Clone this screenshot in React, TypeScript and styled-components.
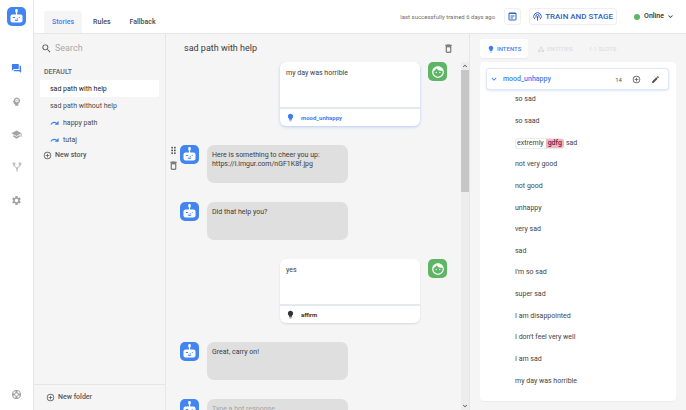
import React from "react";
import styled, { createGlobalStyle, css } from "styled-components";
import {
  MdAddCircleOutline,
  MdCategory,
  MdDragIndicator,
  MdEdit,
  MdExpandMore,
  MdFace,
  MdLightbulb,
  MdOutlineDelete,
  MdQuestionAnswer,
  MdSchool,
  MdSearch,
  MdSettings,
  MdSettingsEthernet,
  MdPsychology,
  MdSupport,
} from "react-icons/md";

const blue = "#3f7ef0";
const line = "#e6e6e6";

const GlobalStyle = createGlobalStyle`
  *, *::before, *::after { box-sizing: border-box; }
  body { margin: 0; background: #f5f5f5; color: #444; font: 400 7px/9px Roboto, sans-serif; }
  button, input, textarea { font: inherit; color: inherit; border: 0; padding: 0; margin: 0; background: none; outline: 0; }
  button { cursor: pointer; }
  svg { display: block; flex: none; }
  h1, h2, ul { margin: 0; padding: 0; list-style: none; }
`;

const Page = styled.div`
  display: grid;
  grid-template: 34px minmax(0, 1fr) / 34px 132px minmax(0, 1fr) 216px;
  height: 100vh;
  overflow: hidden;
`;

const Rail = styled.nav`
  grid-row: 1 / 3;
  display: flex;
  flex-direction: column;
  align-items: center;
  background: #fff;
  border-right: 1px solid ${line};
  padding: 7px 0 10px;
`;

const RailLinks = styled.div`
  flex: 1;
  display: flex;
  flex-direction: column;
  align-items: center;
  gap: 21px;
  margin-top: 36px;
`;

const RailLink = styled.a<{ $active?: boolean }>`
  display: grid;
  place-items: center;
  width: 12px;
  height: 12px;
  color: ${(p) => (p.$active ? blue : "#a3a3a3")};
`;

const Header = styled.header`
  grid-column: 2 / 5;
  display: flex;
  align-items: center;
  background: #fff;
  border-bottom: 1px solid ${line};
  padding: 0 11px 0 10px;
`;

const HeaderTabs = styled.nav`
  display: flex;
  align-self: flex-end;
  flex: 1;
`;

const HeaderTab = styled.a<{ $active?: boolean }>`
  padding: 7px 8px 6px;
  margin-right: 3px;
  border-radius: 3px 3px 0 0;
  font-weight: 500;
  text-decoration: none;
  color: ${(p) => (p.$active ? blue : "#4a4a4a")};
  background: ${(p) => (p.$active ? "#f5f5f5" : "none")};
`;

const Trained = styled.span`
  color: #6e6e6e;
  margin-right: 9px;
  font-size: 6px;
`;

const HeaderButton = styled.button`
  display: flex;
  align-items: center;
  gap: 3px;
  height: 17px;
  padding: 0 3px;
  margin-right: 8px;
  border: 1px solid #eceff5;
  border-radius: 3px;
  color: #2f5fc0;
  font-size: 8px;
  font-weight: 500;
`;

const Status = styled.button`
  display: flex;
  align-items: center;
  gap: 4px;
  margin-left: 9px;
  font-weight: 500;
  color: #2c2c2c;
  svg { margin-left: -2px; }
`;

const Dot = styled.span`
  width: 6px;
  height: 6px;
  border-radius: 50%;
  background: #5cb562;
`;

const Sidebar = styled.aside`
  display: flex;
  flex-direction: column;
  border-right: 1px solid ${line};
`;

const Search = styled.label`
  display: flex;
  align-items: center;
  gap: 3px;
  height: 28px;
  padding: 0 7px;
  color: #555;
`;

const SearchInput = styled.input`
  flex: 1;
  min-width: 0;
  font-size: 9px;
  line-height: 12px;
  &::placeholder { color: #a9a9a9; opacity: 1; }
`;

const Folder = styled.section`
  flex: 1;
  padding: 6px 6px 0;
`;

const FolderName = styled.h2`
  font-size: 7px;
  font-weight: 500;
  line-height: 9px;
  color: #666;
  padding: 0 4px;
  margin-bottom: 3px;
`;

const StoryButton = styled.button<{ $active?: boolean }>`
  display: flex;
  align-items: center;
  gap: 4px;
  width: 100%;
  height: 17px;
  border-radius: 1px;
  padding: 1px 0 0 10px;
  background: ${(p) => (p.$active ? "#fff" : "none")};
  color: ${(p) => (p.$active ? "#222" : "#4a4a4a")};
  svg { color: ${blue}; }
`;

const AddButton = styled.button`
  display: flex;
  align-items: center;
  gap: 3px;
  height: 15px;
  padding-left: 3px;
  font-weight: 500;
  color: #555;
`;

const SidebarFooter = styled.footer`
  border-top: 1px solid ${line};
  height: 26px;
  padding: 5px 9px;
`;

const Chat = styled.main`
  display: flex;
  flex-direction: column;
  min-height: 0;
  border-right: 1px solid ${line};
`;

const ChatHeader = styled.div`
  display: flex;
  align-items: center;
  justify-content: space-between;
  height: 28px;
  flex: none;
  padding: 0 15px 0 18px;
  color: #555;
`;

const ChatTitle = styled.h1`
  font-size: 9px;
  font-weight: 400;
  line-height: 12px;
  color: #3c3c3c;
`;

const ChatBody = styled.div`
  flex: 1;
  min-height: 0;
  display: flex;
`;

const Messages = styled.ul`
  flex: 1;
  overflow: hidden;
  display: flex;
  flex-direction: column;
  gap: 19px;
  padding: 0 14px 0 1px;
`;

const Message = styled.li<{ $user?: boolean }>`
  flex: none;
  display: flex;
  align-items: flex-start;
  gap: 8px;
  ${(p) => p.$user && css`justify-content: flex-end;`}
`;

const RowTools = styled.div`
  display: flex;
  flex-direction: column;
  align-items: center;
  gap: 4px;
  width: 12px;
  margin-right: -7px;
  color: #5b5b5b;
`;

const BotText = styled.textarea`
  width: 141px;
  height: 38px;
  resize: none;
  overflow: hidden;
  border-radius: 7px;
  background: #dfdfdf;
  padding: 6px 5px;
  color: #3c3c3c;
  &::placeholder { color: #a3a3a3; opacity: 1; }
`;

const UserCard = styled.div<{ $selected?: boolean }>`
  width: 140px;
  border-radius: 6px;
  background: #fff;
  overflow: hidden;
  box-shadow: ${(p) => (p.$selected ? "0 1px 3px rgba(63, 126, 240, 0.35)" : "0 1px 2px rgba(0, 0, 0, 0.12)")};
`;

const UserText = styled.textarea`
  display: block;
  width: 100%;
  height: 45px;
  resize: none;
  overflow: hidden;
  padding: 7px 6px;
  color: #3c3c3c;
`;

const IntentTag = styled.button<{ $selected?: boolean }>`
  display: flex;
  align-items: center;
  gap: 6px;
  width: 100%;
  height: 19px;
  padding: 0 6px;
  border-top: 2px solid #e5e9ee;
  font-size: 6px;
  font-weight: 700;
  color: ${(p) => (p.$selected ? blue : "#333")};
`;

const UserAvatar = styled.div`
  display: grid;
  place-items: center;
  width: 19px;
  height: 19px;
  border-radius: 5px;
  background: #5eb564;
  color: #fff;
`;

const ScrollBar = styled.div`
  width: 8px;
  display: flex;
  flex-direction: column;
  align-items: center;
  background: #ededed;
  color: #333;
`;

const ScrollThumb = styled.div`
  width: 8px;
  height: 35%;
  background: #c6c6c6;
`;

const ScrollEnd = styled.div<{ $up?: boolean }>`
  height: 8px;
  margin-top: ${(p) => (p.$up ? "0" : "auto")};
  transform: ${(p) => (p.$up ? "rotate(180deg)" : "none")};
`;

const Panel = styled.section`
  display: flex;
  flex-direction: column;
  min-height: 0;
  padding: 5px 10px 9px;
  gap: 4px;
`;

const PanelTabs = styled.div`
  display: flex;
  gap: 2px;
`;

const PanelTab = styled.button<{ $active?: boolean }>`
  display: flex;
  align-items: center;
  gap: 2px;
  height: 19px;
  padding: 0 7px;
  border-radius: 3px;
  font-size: 6px;
  font-weight: 500;
  color: ${(p) => (p.$active ? blue : "#dedede")};
  background: ${(p) => (p.$active ? "#fff" : "none")};
  box-shadow: ${(p) => (p.$active ? "0 1px 1px rgba(0, 0, 0, 0.05)" : "none")};
`;

const IntentCard = styled.div`
  flex: 1;
  min-height: 0;
  display: flex;
  flex-direction: column;
  background: #fff;
  border-radius: 4px;
  padding: 7px 8px 9px 7px;
  box-shadow: 0 1px 1px rgba(0, 0, 0, 0.04);
`;

const IntentHead = styled.div`
  display: flex;
  align-items: center;
  height: 20px;
  flex: none;
  padding: 0 8px 0 2px;
  border-radius: 2px;
  box-shadow: 0 0 0 1px #dfe9fd, 0 1px 3px rgba(63, 126, 240, 0.4);
`;

const IntentToggle = styled.button`
  flex: 1;
  display: flex;
  align-items: center;
  gap: 4px;
  font-weight: 500;
  color: ${blue};
`;

const Count = styled.span`
  color: #555;
  font-size: 6px;
  margin-right: 10px;
`;

const IconButton = styled.button`
  display: grid;
  place-items: center;
  color: #555;
`;

const HeadActions = styled.div`
  display: flex;
  gap: 10px;
`;

const Examples = styled.ul`
  flex: 1;
  display: grid;
  grid-auto-rows: minmax(0, 1fr);
  align-items: center;
  padding-left: 28px;
`;

const Example = styled.li`
  display: flex;
  align-items: center;
`;

const Annotated = styled.span`
  display: flex;
  margin-right: 2px;
  border: 1px solid #ececec;
  border-right: 0;
  border-radius: 3px;
  padding-left: 1px;
`;

const Entity = styled.mark`
  margin-left: 2px;
  padding: 0 2px;
  border-radius: 0 2px 2px 0;
  background: #f0b6c8;
  color: #6b2239;
  font-weight: 500;
`;

function Robot() {
  return (
    <svg width="19" height="19" viewBox="0 0 38 38" aria-hidden="true">
      <rect width="38" height="38" rx="10" fill="#4285f0" />
      <rect x="16.5" y="4" width="5" height="7" rx="2" fill="#fff" />
      <path d="M19 9v8" stroke="#fff" strokeWidth="2.4" />
      <rect x="7" y="15" width="24" height="16" rx="4" fill="#fff" />
      <path d="M12.500 21h3M24.500 21h.1M20.500 23h.1M16.500 26q2.500 1.500 5 0" fill="none" stroke="#4285f0" strokeWidth="2.2" strokeLinecap="round" />
    </svg>
  );
}

function LinkArrow() {
  return (
    <svg width="9" height="9" viewBox="0 0 24 24" fill="currentColor" aria-hidden="true">
      <path d="M18 10C16 8 14 7 11.5 7 7 7 3 10 1 14.5l3 1C5 12.500 8 10.500 11.500 10.500c2 0 3 .5 4.500 1.500L12.500 15.500H23V5z" />
    </svg>
  );
}

function LogIcon() {
  return (
    <svg width="9" height="9" viewBox="0 0 18 18" aria-hidden="true">
      <rect x="2" y="2" width="14" height="14" rx="1" fill="none" stroke="currentColor" strokeWidth="2" />
      <path d="M2 3h14M5 8h8M5 12h5" stroke="currentColor" strokeWidth="2" />
    </svg>
  );
}

function TrainIcon() {
  return (
    <svg width="9" height="9" viewBox="0 0 20 20" fill="none" stroke="currentColor" strokeWidth="2.2" aria-hidden="true">
      <path d="M4 16A8.500 8.500 0 1 1 16 16M6.500 12.500V9a3.500 3.500 0 0 1 7 0v3.500" />
      <path d="M10 9v10" />
    </svg>
  );
}

function BranchIcon() {
  return (
    <svg width="10" height="10" viewBox="0 0 20 20" fill="none" stroke="currentColor" strokeWidth="1.8" aria-hidden="true">
      <circle cx="4" cy="3.500" r="2" />
      <circle cx="16" cy="3.500" r="2" />
      <path d="M4 6c0 5 6 3 6 8M16 6c0 5-6 3-6 8v5" />
    </svg>
  );
}

function StoryLink({ name, active, linked }: { name: string; active?: boolean; linked?: boolean }) {
  return (
    <StoryButton $active={active}>
      {linked && <LinkArrow />}
      {name}
    </StoryButton>
  );
}

function BotMessage({ text, tools }: { text?: string; tools?: boolean }) {
  return (
    <Message>
      <RowTools>
        {tools && (
          <>
            <IconButton aria-label="Move message"><MdDragIndicator size={11} /></IconButton>
            <IconButton aria-label="Delete message"><MdOutlineDelete size={11} /></IconButton>
          </>
        )}
      </RowTools>
      <Robot />
      <BotText aria-label="Bot response" placeholder="Type a bot response" defaultValue={text} />
    </Message>
  );
}

function UserMessage({ text, intent, selected }: { text: string; intent: string; selected?: boolean }) {
  return (
    <Message $user>
      <UserCard $selected={selected}>
        <UserText aria-label="User message" defaultValue={text} />
        <IntentTag $selected={selected}><MdLightbulb size={9} />{intent}</IntentTag>
      </UserCard>
      <UserAvatar><MdFace size={14} /></UserAvatar>
    </Message>
  );
}

const before = ["so sad", "so saad"];
const after = [
  "not very good", "not good", "unhappy", "very sad", "sad", "I'm so sad", "super sad",
  "I am disappointed", "I don't feel very well", "I am sad", "my day was horrible",
];

export default function App() {
  return (
    <>
      <GlobalStyle />
      <Page>
        <Rail>
          <Robot />
          <RailLinks>
            <RailLink href="#talk" aria-label="Conversations" $active><MdQuestionAnswer size={11} /></RailLink>
            <RailLink href="#nlu" aria-label="Training"><MdPsychology size={11} /></RailLink>
            <RailLink href="#learn" aria-label="Models"><MdSchool size={11} /></RailLink>
            <RailLink href="#branches" aria-label="Versions"><BranchIcon /></RailLink>
            <RailLink href="#settings" aria-label="Settings"><MdSettings size={11} /></RailLink>
          </RailLinks>
          <RailLink href="#help" aria-label="Help"><MdSupport size={11} /></RailLink>
        </Rail>

        <Header>
          <HeaderTabs>
            <HeaderTab href="#stories" $active>Stories</HeaderTab>
            <HeaderTab href="#rules">Rules</HeaderTab>
            <HeaderTab href="#fallback">Fallback</HeaderTab>
          </HeaderTabs>
          <Trained>last successfully trained 6 days ago</Trained>
          <HeaderButton aria-label="Training log"><LogIcon /></HeaderButton>
          <HeaderButton><TrainIcon />TRAIN AND STAGE</HeaderButton>
          <Status><Dot />Online<MdExpandMore size={9} /></Status>
        </Header>

        <Sidebar>
          <Search>
            <MdSearch size={11} />
            <SearchInput placeholder="Search" aria-label="Search" />
          </Search>
          <Folder>
            <FolderName>DEFAULT</FolderName>
            <StoryLink name="sad path with help" active />
            <StoryLink name="sad path without help" />
            <StoryLink name="happy path" linked />
            <StoryLink name="tutaj" linked />
            <AddButton><MdAddCircleOutline size={9} />New story</AddButton>
          </Folder>
          <SidebarFooter>
            <AddButton><MdAddCircleOutline size={9} />New folder</AddButton>
          </SidebarFooter>
        </Sidebar>

        <Chat>
          <ChatHeader>
            <ChatTitle>sad path with help</ChatTitle>
            <IconButton aria-label="Delete story"><MdOutlineDelete size={11} /></IconButton>
          </ChatHeader>
          <ChatBody>
            <Messages>
              <UserMessage text="my day was horrible" intent="mood_unhappy" selected />
              <BotMessage tools text={"Here is something to cheer you up:\nhttps://i.imgur.com/nGF1K8f.jpg"} />
              <BotMessage text="Did that help you?" />
              <UserMessage text="yes" intent="affirm" />
              <BotMessage text="Great, carry on!" />
              <BotMessage />
            </Messages>
            <ScrollBar aria-hidden="true">
              <ScrollEnd $up><MdExpandMore size={8} /></ScrollEnd>
              <ScrollThumb />
              <ScrollEnd><MdExpandMore size={8} /></ScrollEnd>
            </ScrollBar>
          </ChatBody>
        </Chat>

        <Panel>
          <PanelTabs>
            <PanelTab $active><MdLightbulb size={8} />INTENTS</PanelTab>
            <PanelTab><MdCategory size={8} />ENTITIES</PanelTab>
            <PanelTab><MdSettingsEthernet size={8} />SLOTS</PanelTab>
          </PanelTabs>
          <IntentCard>
            <IntentHead>
              <IntentToggle><MdExpandMore size={10} />mood_unhappy</IntentToggle>
              <Count>14</Count>
              <HeadActions>
                <IconButton aria-label="Add example"><MdAddCircleOutline size={9} /></IconButton>
                <IconButton aria-label="Edit intent"><MdEdit size={9} /></IconButton>
              </HeadActions>
            </IntentHead>
            <Examples>
              {before.map((t) => <Example key={t}>{t}</Example>)}
              <Example><Annotated>extremly <Entity>gdfg</Entity></Annotated>sad</Example>
              {after.map((t) => <Example key={t}>{t}</Example>)}
            </Examples>
          </IntentCard>
        </Panel>
      </Page>
    </>
  );
}
